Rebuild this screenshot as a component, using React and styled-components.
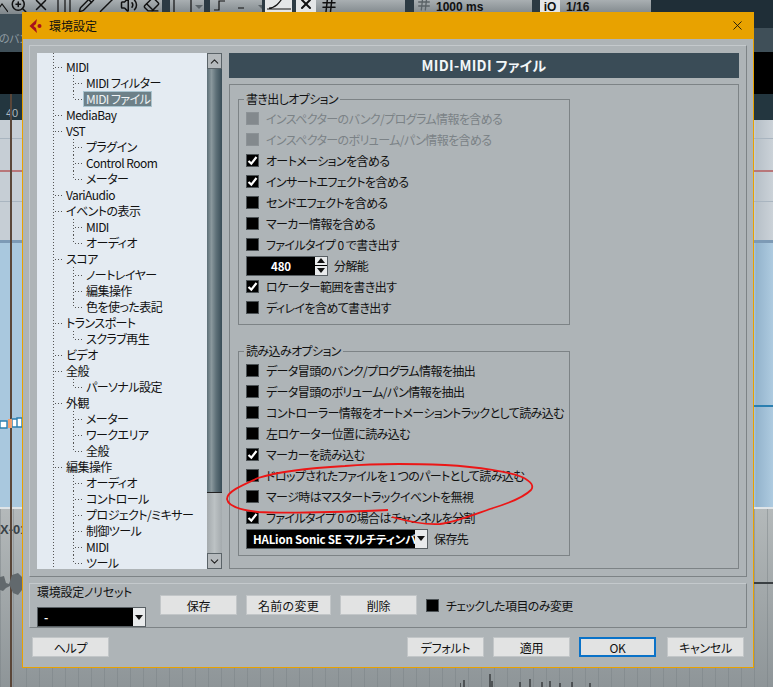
import React from "react";
import styled, { createGlobalStyle } from "styled-components";
import { X, ZoomIn, Pencil, Volume2, Eraser, Slash, ChevronUp, ChevronDown, Hash } from "lucide-react";

const font = `"Noto Sans CJK JP", "Noto Sans", sans-serif`;

const Global = createGlobalStyle`
  html, body { margin: 0; padding: 0; background: #a6acae; }
  * { box-sizing: border-box; }
`;

const Stage = styled.div`
  position: relative;
  width: 773px;
  height: 687px;
  overflow: hidden;
  font-family: ${font};
  font-size: 12px;
  letter-spacing: -0.6px;
  font-feature-settings: "palt";
  color: #111;
  display: flex;
  flex-direction: column;
`;

/* ---- the arranger behind the dialog ---- */
const Toolbar = styled.div`
  height: 14px;
  flex: none;
  display: flex;
  background: #1f2e37;
  overflow: hidden;
`;
const ToolCell = styled.div`
  width: ${(p) => p.$w}px;
  flex: none;
  height: 14px;
  display: flex;
  align-items: flex-start;
  justify-content: ${(p) => (p.$start ? "flex-start" : "center")};
  gap: ${(p) => p.$gap || 0}px;
  padding-left: ${(p) => p.$pad || 0}px;
  color: ${(p) => (p.$faint ? "#8f969a" : "#111")};
  background: ${(p) => (p.$white ? "#e4e6e7" : p.$dark ? "#2c3a43" : "linear-gradient(#a9afb2,#7f878b)")};
  font: bold 12px/14px "Liberation Sans", sans-serif;
  letter-spacing: 0;
  white-space: nowrap;
  & > svg {
    margin-top: -4px;
    flex: none;
  }
`;
const SlateBand = styled.div`
  height: 38px;
  flex: none;
  display: flex;
  justify-content: space-between;
  background: #3f4f58;
`;
const BackLabel = styled.div`
  color: #8f9ba2;
  font-size: 11px;
  padding-top: 16px;
  margin-left: -1px;
  width: 24px;
  overflow: hidden;
  white-space: nowrap;
`;
const SlateTop = styled.div`
  width: 19px;
  height: 14px;
  background: #1f2e37;
`;
const BlackBand = styled.div`
  height: 42px;
  flex: none;
  background: #000;
`;
const RulerBand = styled.div`
  height: 26px;
  flex: none;
  background: #23363f;
  color: #aeb8bd;
  font: 11px/14px "Liberation Sans", sans-serif;
  letter-spacing: 0;
  padding: 12px 0 0 6px;
`;
const GridBand = styled.div`
  height: 120px;
  flex: none;
  background:
    linear-gradient(#a9b5c0, #a9b5c0) 0 18px / 100% 1px no-repeat,
    linear-gradient(#b8777a, #b8777a) 0 50px / 100% 2px no-repeat,
    linear-gradient(#a9b5c0, #a9b5c0) 0 81px / 100% 1px no-repeat,
    linear-gradient(to right, #c6ced5 0 754px, #b7c0c8 756px, #cbd2d8 773px);
`;
const TrackBand = styled.div`
  height: 269px;
  flex: none;
  border-top: 3px solid #7d9ab5;
  border-bottom: 2px solid #dfe4e7;
  background:
    linear-gradient(#2b7fb0, #2b7fb0) 754px 162px / 19px 2px no-repeat,
    linear-gradient(to right, #a9c8de 0 754px, #93b3cc 756px, #aecbe0 773px);
`;
const LowerBand = styled.div`
  flex: 1;
  position: relative;
  font: bold 13px "Liberation Sans", sans-serif;
  letter-spacing: 0;
  color: #3a4348;
  padding-top: 13px;
  background:
    linear-gradient(#3a3f42, #3a3f42) 754px 73px / 19px 2px no-repeat,
    repeating-linear-gradient(to right, rgba(120, 128, 132, 0.45) 0 1px, transparent 1px 13px),
    linear-gradient(#b4b9ba, #8e9598);
`;
const Playhead = styled.div`
  position: absolute;
  left: 10px;
  top: 94px;
  bottom: 0;
  width: 2px;
  background: #5a4638;
`;
const Clips = styled.svg`
  position: absolute;
  left: 0;
  top: 417px;
`;
const Wave = styled.svg`
  position: absolute;
  left: 0;
  top: 572px;
`;
const BottomWave = styled.svg`
  position: absolute;
  left: 460px;
  top: 672px;
`;

/* ---- the dialog ---- */
const Dialog = styled.div`
  position: absolute;
  left: 22px;
  top: 12px;
  width: 732px;
  height: 656px;
  border: 1px solid #e8a200;
  border-top: 0;
  background: #aeb4b7;
  display: flex;
  flex-direction: column;
`;
const TitleBar = styled.div`
  height: 27px;
  flex: none;
  background: #e8a200;
  display: flex;
  align-items: center;
  padding: 0 8px 0 6px;
  gap: 6px;
  letter-spacing: 0;
`;
const TitleText = styled.span`
  flex: 1;
`;
const Panel = styled.div`
  margin: 6px 6px 0;
  border: 1px solid #7d8386;
  border-top-color: #c4c9cc;
  border-left-color: #c4c9cc;
  display: flex;
`;
const MainPanel = styled(Panel)`
  height: 532px;
  padding: 7px;
  gap: 7px;
`;
const Tree = styled.div`
  width: 170px;
  height: 516px;
  flex: none;
  overflow: hidden;
  padding-top: 6px;
  letter-spacing: -0.55px;
  background:
    repeating-linear-gradient(to bottom, #555 0 1px, transparent 1px 3px) 16px 0 / 1px 100% no-repeat,
    #e4ebf2;
`;
const dotsH = "repeating-linear-gradient(to right, #555 0 1px, transparent 1px 3px)";
const dotsV = "repeating-linear-gradient(to bottom, #555 0 1px, transparent 1px 3px)";
const TreeRow = styled.div`
  height: 16px;
  line-height: 16px;
  white-space: nowrap;
  padding-left: ${(p) => (p.$child ? 49 : 29)}px;
  background: ${(p) =>
    p.$child
      ? `${dotsH} 38px 8px / 9px 1px no-repeat, ${dotsV} 36px 0 / 1px ${p.$last ? 9 : 16}px no-repeat`
      : `${dotsH} 18px 8px / 9px 1px no-repeat`};
`;
const Selected = styled.span`
  display: inline-block;
  height: 16px;
  line-height: 14px;
  margin-left: -3px;
  padding: 0 2px;
  width: 69px;
  background: #6d8088;
  border: 1px solid #a9c4d0;
  color: #eef2f4;
`;
const ScrollBar = styled.div`
  width: 15px;
  height: 516px;
  flex: none;
  margin-left: -7px;
  display: flex;
  flex-direction: column;
  background: linear-gradient(to right, #a4aaad, #bcc2c4 50%, #a4aaad);
`;
const ScrollButton = styled.div`
  height: 16px;
  flex: none;
  display: flex;
  align-items: center;
  justify-content: center;
  border: 1px solid #5a6368;
  background: #b5babd;
  color: #222;
`;
const Thumb = styled.div`
  height: 424px;
  flex: none;
  border-bottom: 1px solid #222;
  background: linear-gradient(to right, #5c6e76, #8a989d 30%, #5f7179 60%, #394d57);
`;
const Spacer = styled.div`
  flex: 1;
`;
const RightColumn = styled.div`
  flex: 1;
  min-width: 0;
  display: flex;
  flex-direction: column;
  gap: 6px;
`;
const Header = styled.div`
  height: 25px;
  flex: none;
  background: #3a4c57;
  color: #f2f6f8;
  font-size: 14px;
  font-weight: 700;
  letter-spacing: 0.3px;
  line-height: 24px;
  text-align: center;
`;
const Pane = styled.div`
  flex: 1;
  border: 1px solid #7d8386;
  padding: 6px 168px 0 8px;
  display: flex;
  flex-direction: column;
  gap: 18px;
`;
const Group = styled.fieldset`
  margin: 0;
  min-width: 0;
  padding: 1px 0 6px 7px;
  border: 1px solid #7d8386;
`;
const Legend = styled.legend`
  margin-left: -2px;
  padding: 0 2px;
  line-height: 16px;
`;
const Row = styled.div`
  height: 21px;
  display: flex;
  align-items: center;
  gap: 7px;
  white-space: nowrap;
  color: ${(p) => (p.$off ? "#7b8286" : "#111")};
`;
const Box = styled.span`
  width: 13px;
  height: 13px;
  flex: none;
  display: flex;
  align-items: center;
  justify-content: center;
  background: ${(p) => (p.$off ? "#83898d" : "#000")};
  border: 1px solid ${(p) => (p.$off ? "#8c9296" : "#4c5255")};
`;
const FieldRow = styled(Row)`
  gap: 6px;
`;
const BlackField = styled.div`
  width: ${(p) => p.$w}px;
  height: 20px;
  flex: none;
  display: flex;
  align-items: stretch;
  background: #000;
  color: #fff;
  font-weight: 700;
  font-size: 11.5px;
  letter-spacing: -0.2px;
  line-height: 18px;
  border: 1px solid #585f63;
`;
const FieldValue = styled.div`
  flex: 1;
  min-width: 0;
  overflow: hidden;
  white-space: nowrap;
  padding-left: ${(p) => (p.$center ? 0 : 6)}px;
  text-align: ${(p) => (p.$center ? "center" : "left")};
`;
const DropButton = styled.div`
  width: 12px;
  flex: none;
  background: #e9ebec;
  display: flex;
  align-items: center;
  justify-content: center;
`;
const Spin = styled.div`
  width: 12px;
  flex: none;
  display: flex;
  flex-direction: column;
  gap: 1px;
  background: #000;
`;
const SpinPart = styled(DropButton)`
  flex: 1;
`;
const PresetPanel = styled(Panel)`
  height: 45px;
  padding: 0 0 0 7px;
`;
const PresetColumn = styled.div`
  width: 123px;
  flex: none;
`;
const PresetLabel = styled.div`
  line-height: 16px;
  height: 23px;
  letter-spacing: -0.25px;
`;
const PresetButtons = styled.div`
  display: flex;
  align-items: center;
  gap: 9px;
  margin-bottom: 1px;
`;
const Button = styled.div`
  width: ${(p) => p.$w || 77}px;
  height: 20px;
  flex: none;
  margin-left: ${(p) => p.$ml || 0}px;
  display: flex;
  align-items: center;
  justify-content: center;
  white-space: nowrap;
  background: #e2e3e3;
  letter-spacing: ${(p) => (p.$spread ? "0.3px" : "-0.3px")};
  border: ${(p) => (p.$primary ? "2px solid #0a72c8" : "1px solid #c2c6c8")};
`;
const Footer = styled.div`
  display: flex;
  align-items: center;
  padding: 9px 9px 0;
  gap: 9px;
`;
const Scribble = styled.svg`
  position: absolute;
  left: 0;
  top: 0;
  pointer-events: none;
`;

const tree = [
  ["MIDI"],
  ["MIDI フィルター", 1],
  ["MIDI ファイル", 2],
  ["MediaBay"],
  ["VST"],
  ["プラグイン", 1],
  ["Control Room", 1],
  ["メーター", 2],
  ["VariAudio"],
  ["イベントの表示"],
  ["MIDI", 1],
  ["オーディオ", 2],
  ["スコア"],
  ["ノートレイヤー", 1],
  ["編集操作", 1],
  ["色を使った表記", 2],
  ["トランスポート"],
  ["スクラブ再生", 2],
  ["ビデオ"],
  ["全般"],
  ["パーソナル設定", 2],
  ["外観"],
  ["メーター", 1],
  ["ワークエリア", 1],
  ["全般", 2],
  ["編集操作"],
  ["オーディオ", 1],
  ["コントロール", 1],
  ["プロジェクト/ミキサー", 1],
  ["制御ツール", 1],
  ["MIDI", 1],
  ["ツール", 2],
];

const Check = () => (
  <svg width="11" height="11" viewBox="0 0 11 11">
    <path d="M1.5 6 L4.3 8.6 L9.5 2" fill="none" stroke="#fff" strokeWidth="2.2" />
  </svg>
);

const Arrow = ({ up, color = "#111" }) => (
  <svg width="8" height="5" viewBox="0 0 8 5">
    <path d={up ? "M0 5 L4 0 L8 5 Z" : "M0 0 L8 0 L4 5 Z"} fill={color} />
  </svg>
);

const ToolDrop = () => (
  <svg width="8" height="14" viewBox="0 0 8 14">
    <path d="M0 9 H8 L4 13 Z" fill="#5b6367" />
  </svg>
);

const Glyph = ({ w = 18, d }) => (
  <svg width={w} height="18" viewBox={`0 0 ${w} 18`}>
    <path d={d} fill="none" stroke="#111" strokeWidth="1.2" />
  </svg>
);

const Option = ({ state, children }) => (
  <Row $off={state === "off"}>
    <Box $off={state === "off"}>{state === "on" && <Check />}</Box>
    {children}
  </Row>
);

const Logo = () => (
  <svg width="14" height="14" viewBox="0 0 14 14">
    <path d="M8 0 L0.5 7 L8 14 L7 9 L4.5 7 L7 5 Z" fill="#a8101c" />
    <circle cx="10.5" cy="7" r="2" fill="#a8101c" />
  </svg>
);

export default function App() {
  return (
    <Stage>
      <Global />
      <Toolbar>
        <ToolCell $w={8} $start><Glyph w={8} d="M-4 16 L2 8 L8 16" /></ToolCell>
        <ToolCell $w={22}><ZoomIn size={18} /></ToolCell>
        <ToolCell $w={22}><X size={18} /></ToolCell>
        <ToolCell $w={24}><Glyph w={14} d="M1 2 H13 V20 H1 Z M8 2 V20" /></ToolCell>
        <ToolCell $w={20}><Pencil size={17} /></ToolCell>
        <ToolCell $w={22}><Slash size={17} /></ToolCell>
        <ToolCell $w={22}><Volume2 size={18} /></ToolCell>
        <ToolCell $w={22}><Eraser size={17} /></ToolCell>
        <ToolCell $w={8} $dark />
        <ToolCell $w={34} $start $pad={3} $gap={3}>
          <Glyph w={19} d="M1 2 H18 V20 H1 Z" />
          <ToolDrop />
        </ToolCell>
        <ToolCell $w={6} $dark />
        <ToolCell $w={52} $start $pad={4}>
          <Glyph w={44} d="M0 14 H5 V5 H11 M24 12 H30" />
          <ToolDrop />
        </ToolCell>
        <ToolCell $w={3} $dark />
        <ToolCell $w={27} $white><Glyph w={27} d="M4 12 C10 12 14 8 20 -2 M2 13 H26" /></ToolCell>
        <ToolCell $w={4} $dark />
        <ToolCell $w={20} $white><X size={16} strokeWidth={3} /></ToolCell>
        <ToolCell $w={89} $start $pad={4} $gap={10}>
          <Hash size={18} />
        </ToolCell>
        <ToolCell $w={9} $dark />
        <ToolCell $w={118} $start $pad={2} $gap={4}>
          <Hash size={16} color="#5b6367" />
          1000 ms
        </ToolCell>
        <ToolCell $w={8} $dark />
        <ToolCell $w={20} $white>iO</ToolCell>
        <ToolCell $w={91} $start $pad={6}>1/16</ToolCell>
      </Toolbar>
      <SlateBand>
        <BackLabel>のバンキ</BackLabel>
        <SlateTop />
      </SlateBand>
      <BlackBand />
      <RulerBand>40</RulerBand>
      <GridBand />
      <TrackBand />
      <LowerBand>X-01</LowerBand>
      <Playhead />
      <Clips width="22" height="14" viewBox="0 0 22 14">
        <path d="M0 4 H7 V11 H0 Z M12 2 H17 V10 H12 Z M17 1 H22 V10 H17 Z" fill="#fff" stroke="#2b7fb0" strokeWidth="1.4" />
        <rect x="8" y="2" width="4" height="9" fill="#f0a070" />
      </Clips>
      <Wave width="22" height="24" viewBox="0 0 22 24">
        <path d="M0 5 L4 4 L6 11 L9 12 L12 3 L18 1 L22 5 V18 L18 23 L13 21 L10 14 L6 16 L3 19 L0 18 Z" fill="#62696d" />
      </Wave>
      <BottomWave width="180" height="15" viewBox="0 0 180 15">
        <path d="M0 15 V11 M4 15 V8 M30 15 V2 M32 15 V9 M60 15 V10 M70 15 V7 M82 15 V10 M90 15 V9 M100 15 V11 M112 15 V10 M130 15 V11" stroke="#26292b" strokeWidth="1.2" />
      </BottomWave>

      <Dialog>
        <TitleBar>
          <Logo />
          <TitleText>環境設定</TitleText>
          <X size={15} strokeWidth={1.4} />
        </TitleBar>
        <MainPanel>
          <Tree>
            {tree.map(([label, kind], i) => (
              <TreeRow key={i} $child={!!kind} $last={kind === 2}>
                {i === 2 ? <Selected>{label}</Selected> : label}
              </TreeRow>
            ))}
          </Tree>
          <ScrollBar>
            <ScrollButton><ChevronUp size={13} strokeWidth={2} /></ScrollButton>
            <Thumb />
            <Spacer />
            <ScrollButton><ChevronDown size={13} strokeWidth={2} /></ScrollButton>
          </ScrollBar>
          <RightColumn>
            <Header>MIDI-MIDI ファイル</Header>
            <Pane>
              <Group>
                <Legend>書き出しオプション</Legend>
                <Option state="off">インスペクターのバンク/プログラム情報を含める</Option>
                <Option state="off">インスペクターのボリューム/パン情報を含める</Option>
                <Option state="on">オートメーションを含める</Option>
                <Option state="on">インサートエフェクトを含める</Option>
                <Option>センドエフェクトを含める</Option>
                <Option>マーカー情報を含める</Option>
                <Option>ファイルタイプ 0 で書き出す</Option>
                <FieldRow>
                  <BlackField $w={82}>
                    <FieldValue $center>480</FieldValue>
                    <Spin>
                      <SpinPart><Arrow up /></SpinPart>
                      <SpinPart><Arrow /></SpinPart>
                    </Spin>
                  </BlackField>
                  分解能
                </FieldRow>
                <Option state="on">ロケーター範囲を書き出す</Option>
                <Option>ディレイを含めて書き出す</Option>
              </Group>
              <Group>
                <Legend>読み込みオプション</Legend>
                <Option>データ冒頭のバンク/プログラム情報を抽出</Option>
                <Option>データ冒頭のボリューム/パン情報を抽出</Option>
                <Option>コントローラー情報をオートメーショントラックとして読み込む</Option>
                <Option>左ロケーター位置に読み込む</Option>
                <Option state="on">マーカーを読み込む</Option>
                <Option>ドロップされたファイルを 1 つのパートとして読み込む</Option>
                <Option>マージ時はマスタートラックイベントを無視</Option>
                <Option state="on">ファイルタイプ 0 の場合はチャンネルを分割</Option>
                <FieldRow>
                  <BlackField $w={182}>
                    <FieldValue>HALion Sonic SE マルチティンバー</FieldValue>
                    <DropButton><Arrow /></DropButton>
                  </BlackField>
                  保存先
                </FieldRow>
              </Group>
            </Pane>
          </RightColumn>
        </MainPanel>
        <PresetPanel>
          <PresetColumn>
            <PresetLabel>環境設定ノリセット</PresetLabel>
            <BlackField $w={109}>
              <FieldValue>-</FieldValue>
              <DropButton><Arrow /></DropButton>
            </BlackField>
          </PresetColumn>
          <PresetButtons>
            <Button>保存</Button>
            <Button $w={85} $spread>名前の変更</Button>
            <Button>削除</Button>
            <Row>
              <Box />
              チェックした項目のみ変更
            </Row>
          </PresetButtons>
        </PresetPanel>
        <Footer>
          <Button>ヘルプ</Button>
          <Spacer />
          <Button>デフォルト</Button>
          <Button>適用</Button>
          <Button $primary>OK</Button>
          <Button $ml={2}>キャンセル</Button>
        </Footer>
      </Dialog>

      <Scribble width="773" height="687" viewBox="0 0 773 687">
        <path
          d="M388 510 C340 512 290 514 258 512 C240 510 228 506 227 499 C227 492 240 486 258 478 C280 471 310 468 345 466 C380 463 420 464 445 465 C480 467 510 472 522 477 C532 482 534 486 531 490 C525 496 510 503 490 509 C470 516 455 522 440 524 C425 525 410 522 392 517"
          fill="none"
          stroke="#ec1616"
          strokeWidth="1.8"
        />
      </Scribble>
    </Stage>
  );
}
